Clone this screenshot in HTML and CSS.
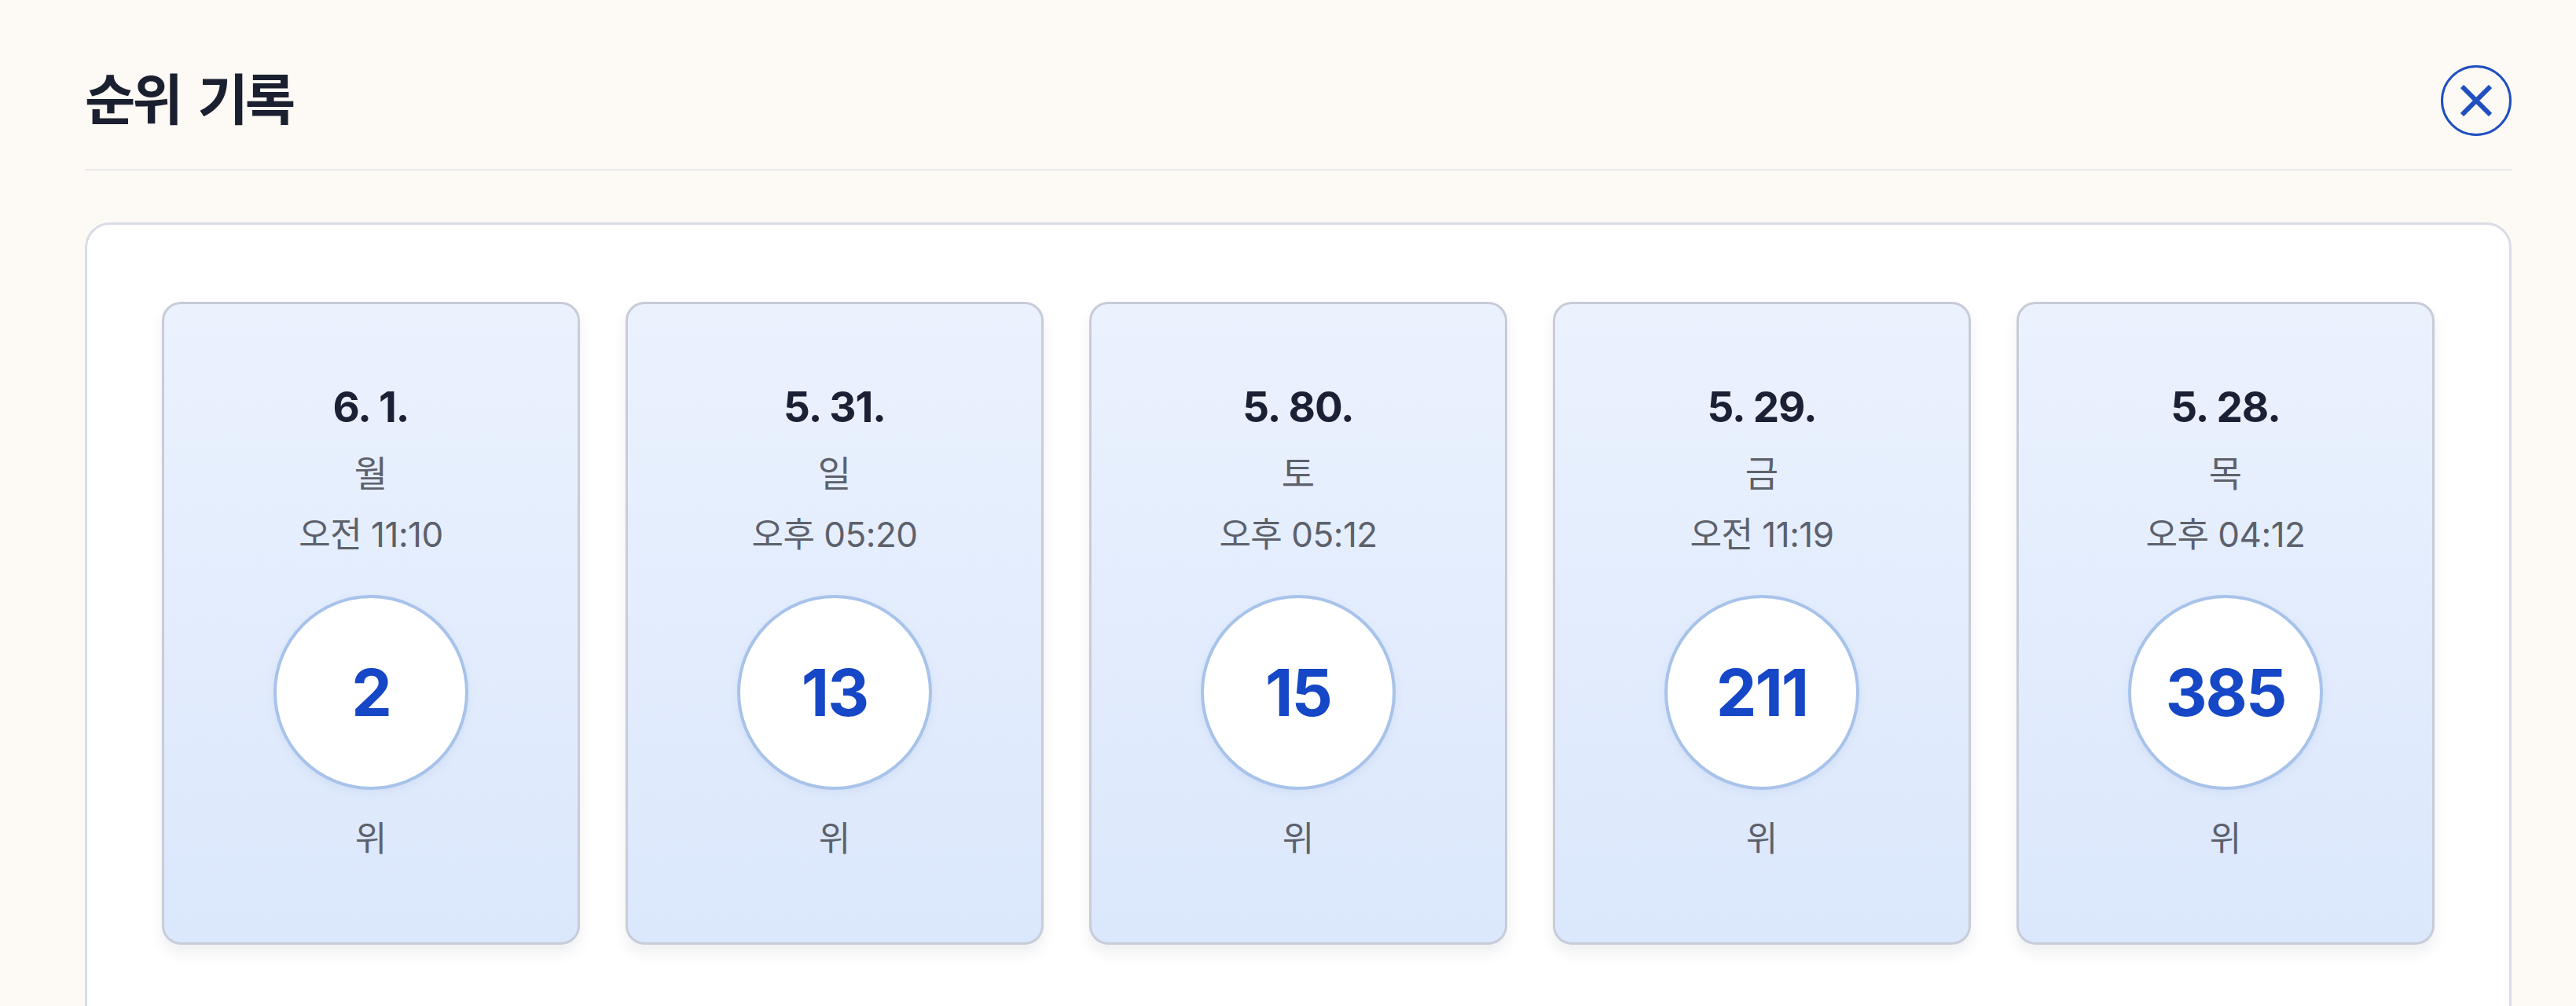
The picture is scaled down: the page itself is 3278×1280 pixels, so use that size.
FILE: index.html
```html
<!DOCTYPE html>
<html lang="ko">
<head>
    <meta charset="UTF-8">
    <meta name="viewport" content="width=device-width, initial-scale=1.0">
    <title>순위 기록</title>
    <link rel="stylesheet" href="styles.css">
</head>
<body>

<div class="container">
    <div class="header">
        <h1>순위 기록</h1>
        <button class="close-btn" aria-label="닫기">
            <svg width="40" height="40" viewBox="0 0 40 40">
                <path d="M2 2 L38 38 M38 2 L2 38" stroke="#1f4fc0" stroke-width="6" stroke-linecap="butt"/>
            </svg>
        </button>
    </div>

    <div class="panel">
        <div class="ranks">
            <div class="rank-card">
                <p class="date">6. 1.</p>
                <p class="day">월</p>
                <p class="time">오전 11:10</p>
                <div class="rank-circle">2</div>
                <p class="unit">위</p>
            </div>
            <div class="rank-card">
                <p class="date">5. 31.</p>
                <p class="day">일</p>
                <p class="time">오후 05:20</p>
                <div class="rank-circle">13</div>
                <p class="unit">위</p>
            </div>
            <div class="rank-card">
                <p class="date">5. 80.</p>
                <p class="day">토</p>
                <p class="time">오후 05:12</p>
                <div class="rank-circle">15</div>
                <p class="unit">위</p>
            </div>
            <div class="rank-card">
                <p class="date">5. 29.</p>
                <p class="day">금</p>
                <p class="time">오전 11:19</p>
                <div class="rank-circle">211</div>
                <p class="unit">위</p>
            </div>
            <div class="rank-card">
                <p class="date">5. 28.</p>
                <p class="day">목</p>
                <p class="time">오후 04:12</p>
                <div class="rank-circle">385</div>
                <p class="unit">위</p>
            </div>
        </div>
    </div>
</div>

</body>
</html>
```

FILE: styles.css
```css
* {
    margin: 0;
    padding: 0;
    box-sizing: border-box;
}

html, body {
    height: 100%;
    overflow: hidden;
}

body {
    font-family: "Inter", "Noto Sans CJK KR", sans-serif;
    background-color: #fdfaf5;
    color: #1b2032;
}

.container {
    padding: 0 82px 0 108px;
}

/* Title row */
.header {
    display: flex;
    justify-content: space-between;
    align-items: center;
    padding: 83px 0 42px;
    border-bottom: 2px solid #e8e8eb;
}

h1 {
    font-size: 70px;
    font-weight: 700;
    line-height: 90px;
    letter-spacing: -4px;
    word-spacing: 10px;
    color: #1b2030;
}

.close-btn {
    width: 90px;
    height: 90px;
    border: 3px solid #1f4fc0;
    border-radius: 50%;
    background: transparent;
    display: flex;
    align-items: center;
    justify-content: center;
    cursor: pointer;
}

/* White panel holding the cards */
.panel {
    margin-top: 66px;
    background: #ffffff;
    border: 3px solid #d9dce5;
    border-radius: 32px;
    padding: 98px 95px 120px;
}

.ranks {
    display: grid;
    grid-template-columns: repeat(5, 1fr);
    gap: 58px;
}

.rank-card {
    display: flex;
    flex-direction: column;
    align-items: center;
    padding: 101px 0 106px;
    background: linear-gradient(180deg, #ebf2fe 0%, #dbe7fc 100%);
    border: 3px solid #c7ccd8;
    border-radius: 24px;
    box-shadow: 0 10px 18px rgba(40, 50, 80, 0.08);
}

.date {
    font-size: 53px;
    line-height: 60px;
    font-weight: 700;
    letter-spacing: -1px;
    color: #1b2135;
}

.day {
    margin-top: 26px;
    font-size: 46px;
    line-height: 56px;
    color: #5c616c;
}

.time {
    margin-top: 24px;
    font-size: 44px;
    line-height: 52px;
    color: #5c616c;
    letter-spacing: -0.5px;
}

.rank-circle {
    margin-top: 51px;
    width: 248px;
    height: 248px;
    border: 4px solid #a8c3ea;
    border-radius: 50%;
    background: #ffffff;
    display: flex;
    align-items: center;
    justify-content: center;
    font-size: 82px;
    font-weight: 700;
    letter-spacing: -2px;
    color: #1547c6;
    box-shadow: 0 4px 12px rgba(60, 100, 170, 0.08);
}

.unit {
    margin-top: 36px;
    font-size: 44px;
    line-height: 52px;
    color: #5c616c;
}
```
